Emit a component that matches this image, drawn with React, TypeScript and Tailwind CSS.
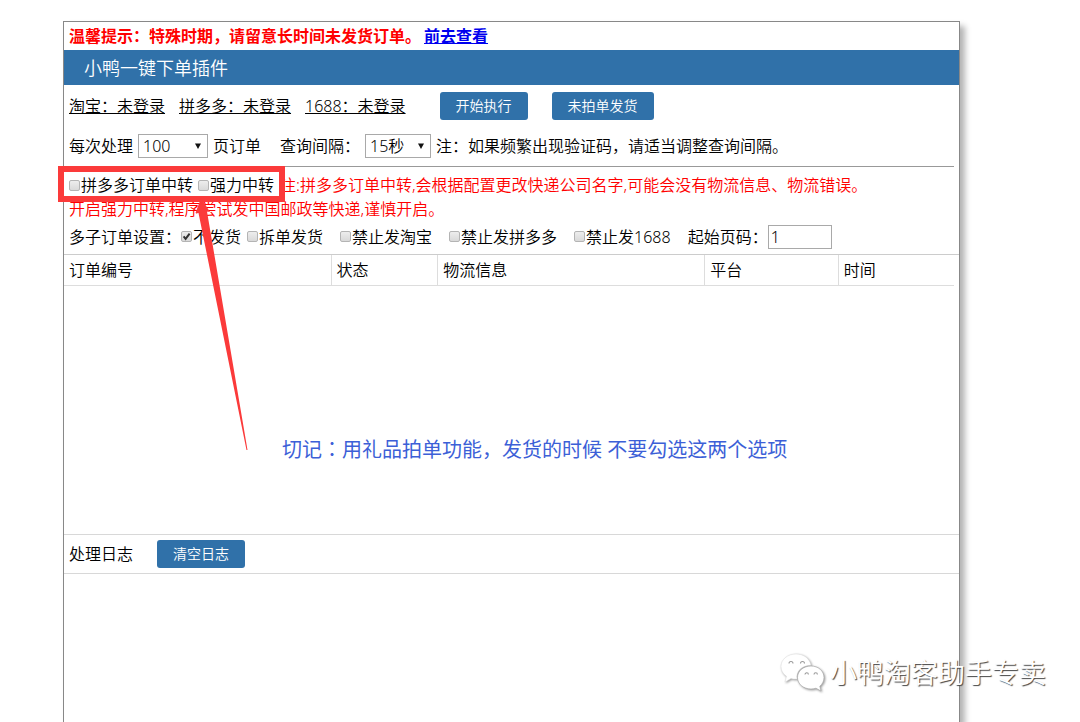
import React, { useState } from "react";

const SANS = "font-['Noto_Sans','Noto_Sans_CJK_SC',sans-serif]";

function ActionButton({ children }: { children: React.ReactNode }) {
  return (
    <button
      type="button"
      className="h-7 shrink-0 cursor-pointer rounded-[3px] bg-[#3071a9] px-4 text-sm text-white hover:bg-[#285e8e]"
    >
      {children}
    </button>
  );
}

function Check({ label, initial = false }: { label: string; initial?: boolean }) {
  const [checked, setChecked] = useState(initial);
  return (
    <label className="flex shrink-0 items-center">
      <span className="relative mr-px flex">
        <input
          type="checkbox"
          checked={checked}
          onChange={(e) => setChecked(e.target.checked)}
          className="size-[11px] appearance-none rounded-[2px] border border-[#b4b4b4] bg-linear-to-b from-[#ededed] to-[#d9d9d9]"
        />
        {checked && (
          <svg viewBox="0 0 11 11" className="pointer-events-none absolute inset-0 size-[11px]">
            <path d="M2.6 5.4 L4.6 7.8 L8.6 2.6" fill="none" stroke="#333" strokeWidth="2" />
          </svg>
        )}
      </span>
      {label}
    </label>
  );
}

function Select({ label, options, width }: { label: string; options: string[]; width: string }) {
  return (
    <span className={`relative flex shrink-0 ${width}`}>
      <select
        aria-label={label}
        className="h-6 w-full appearance-none border border-[#a9a9a9] bg-white pl-1 text-base leading-5"
      >
        {options.map((o) => (
          <option key={o}>{o}</option>
        ))}
      </select>
      <svg viewBox="0 0 6 6" className="pointer-events-none absolute top-[9px] right-[7px] size-[6px]">
        <path d="M0 0.5 H6 L3 6 Z" fill="#111" />
      </svg>
    </span>
  );
}

function WeChatIcon() {
  return (
    <svg viewBox="0 0 46 40" className="h-10 w-[46px] drop-shadow-[1px_1px_1px_rgba(0,0,0,0.4)]">
      <path
        d="M16 1 C7.500 1 1 6.500 1 13.500 C1 17.500 3 21 6.500 23.300 L5 29 L11 25.500 C13 26 14.800 26.200 17 26 C15.500 18.500 22 12.300 31 12.300 C29.800 5.500 23.500 1 16 1 Z"
        fill="#fff"
        stroke="#ddd"
        strokeWidth="0.5"
      />
      <path
        d="M31 13 C23.500 13 17.500 18 17.500 24.500 C17.500 31 23.500 36 31 36 C32.800 36 34.500 35.700 36 35.200 L41 38 L39.800 33.200 C42.500 31 44 28 44 24.500 C44 18 38.300 13 31 13 Z"
        fill="#fff"
        stroke="#aaa"
        strokeWidth="0.7"
      />
      <g fill="none" stroke="#999" strokeWidth="1.1">
        <path d="M9 10.500 A2 2 0 0 1 13 10.500" />
        <path d="M20.500 10.500 A2 2 0 0 1 24.500 10.500" />
        <path d="M25 21.500 A1.700 1.700 0 0 1 28.400 21.500" />
        <path d="M34 21.500 A1.700 1.700 0 0 1 37.400 21.500" />
      </g>
    </svg>
  );
}

const columns = [
  { title: "订单编号", width: "w-[30%]" },
  { title: "状态", width: "w-[12%]" },
  { title: "物流信息", width: "w-[30%]" },
  { title: "平台", width: "w-[15%]" },
  { title: "时间", width: "w-[13%]" },
];

export default function App() {
  return (
    <div className={`relative flex h-screen flex-col overflow-hidden bg-white pt-[21px] pr-[120px] pl-[63px] text-base leading-6 font-[350] text-black ${SANS}`}>
      <main className="relative flex flex-1 flex-col border border-b-0 border-[#888] whitespace-nowrap shadow-[5px_5px_6px_#b4b4b4]">
        <p className="flex h-7 items-center px-[5px] font-bold text-[#ff0000]">
          温馨提示：特殊时期，请留意长时间未发货订单。
          <a href="#orders" className="ml-[3px] text-[#0000ee] underline">
            前去查看
          </a>
        </p>
        <h1 className="flex h-[35px] items-center bg-[#3071a9] px-5 text-lg font-[350] text-white">小鸭一键下单插件</h1>

        <div className="flex h-[41px] items-center gap-[14px] px-[5px]">
          <a href="#taobao" className="underline">淘宝：未登录</a>
          <a href="#pinduoduo" className="underline">拼多多：未登录</a>
          <a href="#1688" className="underline">1688：未登录</a>
          <div className="ml-5 flex gap-6">
            <ActionButton>开始执行</ActionButton>
            <ActionButton>未拍单发货</ActionButton>
          </div>
        </div>

        <div className="mr-[5px] flex h-[41px] items-center gap-[5px] border-b border-[#999] px-[5px]">
          <span>每次处理</span>
          <Select label="每次处理" options={["100", "50", "20"]} width="w-[70px]" />
          <span>页订单</span>
          <span className="ml-[14px]">查询间隔：</span>
          <Select label="查询间隔" options={["15秒", "30秒", "60秒"]} width="w-[66px]" />
          <span>注：如果频繁出现验证码，请适当调整查询间隔。</span>
        </div>

        <div className="px-[5px] pt-[6px]">
          <div className="flex items-center">
            <div className="flex gap-[5px]">
              <Check label="拼多多订单中转" />
              <Check label="强力中转" />
            </div>
            <span className="ml-[6px] text-[#ff0000]">
              注:拼多多订单中转,会根据配置更改快递公司名字,可能会没有物流信息、物流错误。
            </span>
          </div>
          <p className="text-[#ff0000]">开启强力中转,程序尝试发中国邮政等快递,谨慎开启。</p>
        </div>

        <div className="flex h-[33px] items-center px-[5px] pb-[2px]">
          <span>多子订单设置：</span>
          <div className="flex gap-[6px]">
            <Check label="不发货" initial />
            <Check label="拆单发货" />
          </div>
          <div className="ml-[17px] flex items-center gap-[17px]">
            <Check label="禁止发淘宝" />
            <Check label="禁止发拼多多" />
            <Check label="禁止发1688" />
            <label className="flex items-center">
              起始页码：
              <input type="text" defaultValue="1" className="h-6 w-16 border border-[#a9a9a9] bg-white px-0.5" />
            </label>
          </div>
        </div>

        <div className="h-[280px] border-t border-[#ccc] pr-[5px]">
          <table className="w-full table-fixed border-collapse">
            <thead>
              <tr className="border-b border-[#ddd]">
                {columns.map((c) => (
                  <th
                    key={c.title}
                    className={`h-[30px] border-r border-[#ddd] px-[5px] text-left font-[350] last:border-r-0 ${c.width}`}
                  >
                    {c.title}
                  </th>
                ))}
              </tr>
            </thead>
          </table>
        </div>

        <div className="flex h-10 items-center gap-6 border-y border-[#d8d8d8] px-[5px]">
          <h2>处理日志</h2>
          <ActionButton>清空日志</ActionButton>
        </div>
        <div className="flex-1" />
      </main>

      <div className="pointer-events-none absolute top-[166px] left-[58px] h-[36px] w-[227px] border-[6px] border-[#fb3a3a]" />
      <svg viewBox="0 0 60 254" className="pointer-events-none absolute top-[198px] left-[190px] h-[254px] w-[60px]">
        <path d="M11 0 L20 14 L17 13.500 L57.500 252 L56.500 252 L8.500 15 L5.500 15 Z" fill="#fb3a3a" />
      </svg>
      <p className="pointer-events-none absolute top-[434px] left-[282px] text-xl leading-[30px] font-normal whitespace-nowrap text-[#3c5fd7]">
        切记<span className="font-['Noto_Sans_CJK_TC',sans-serif]">：</span>用礼品拍单功能，发货的时候 不要勾选这两个选项
      </p>
      <div className="pointer-events-none absolute top-[653px] left-[780px] flex items-center gap-1 text-[27px] leading-10 whitespace-nowrap text-white">
        <WeChatIcon />
        <span className="[text-shadow:1px_1px_1px_#444]">小鸭淘客助手专卖</span>
      </div>
    </div>
  );
}
